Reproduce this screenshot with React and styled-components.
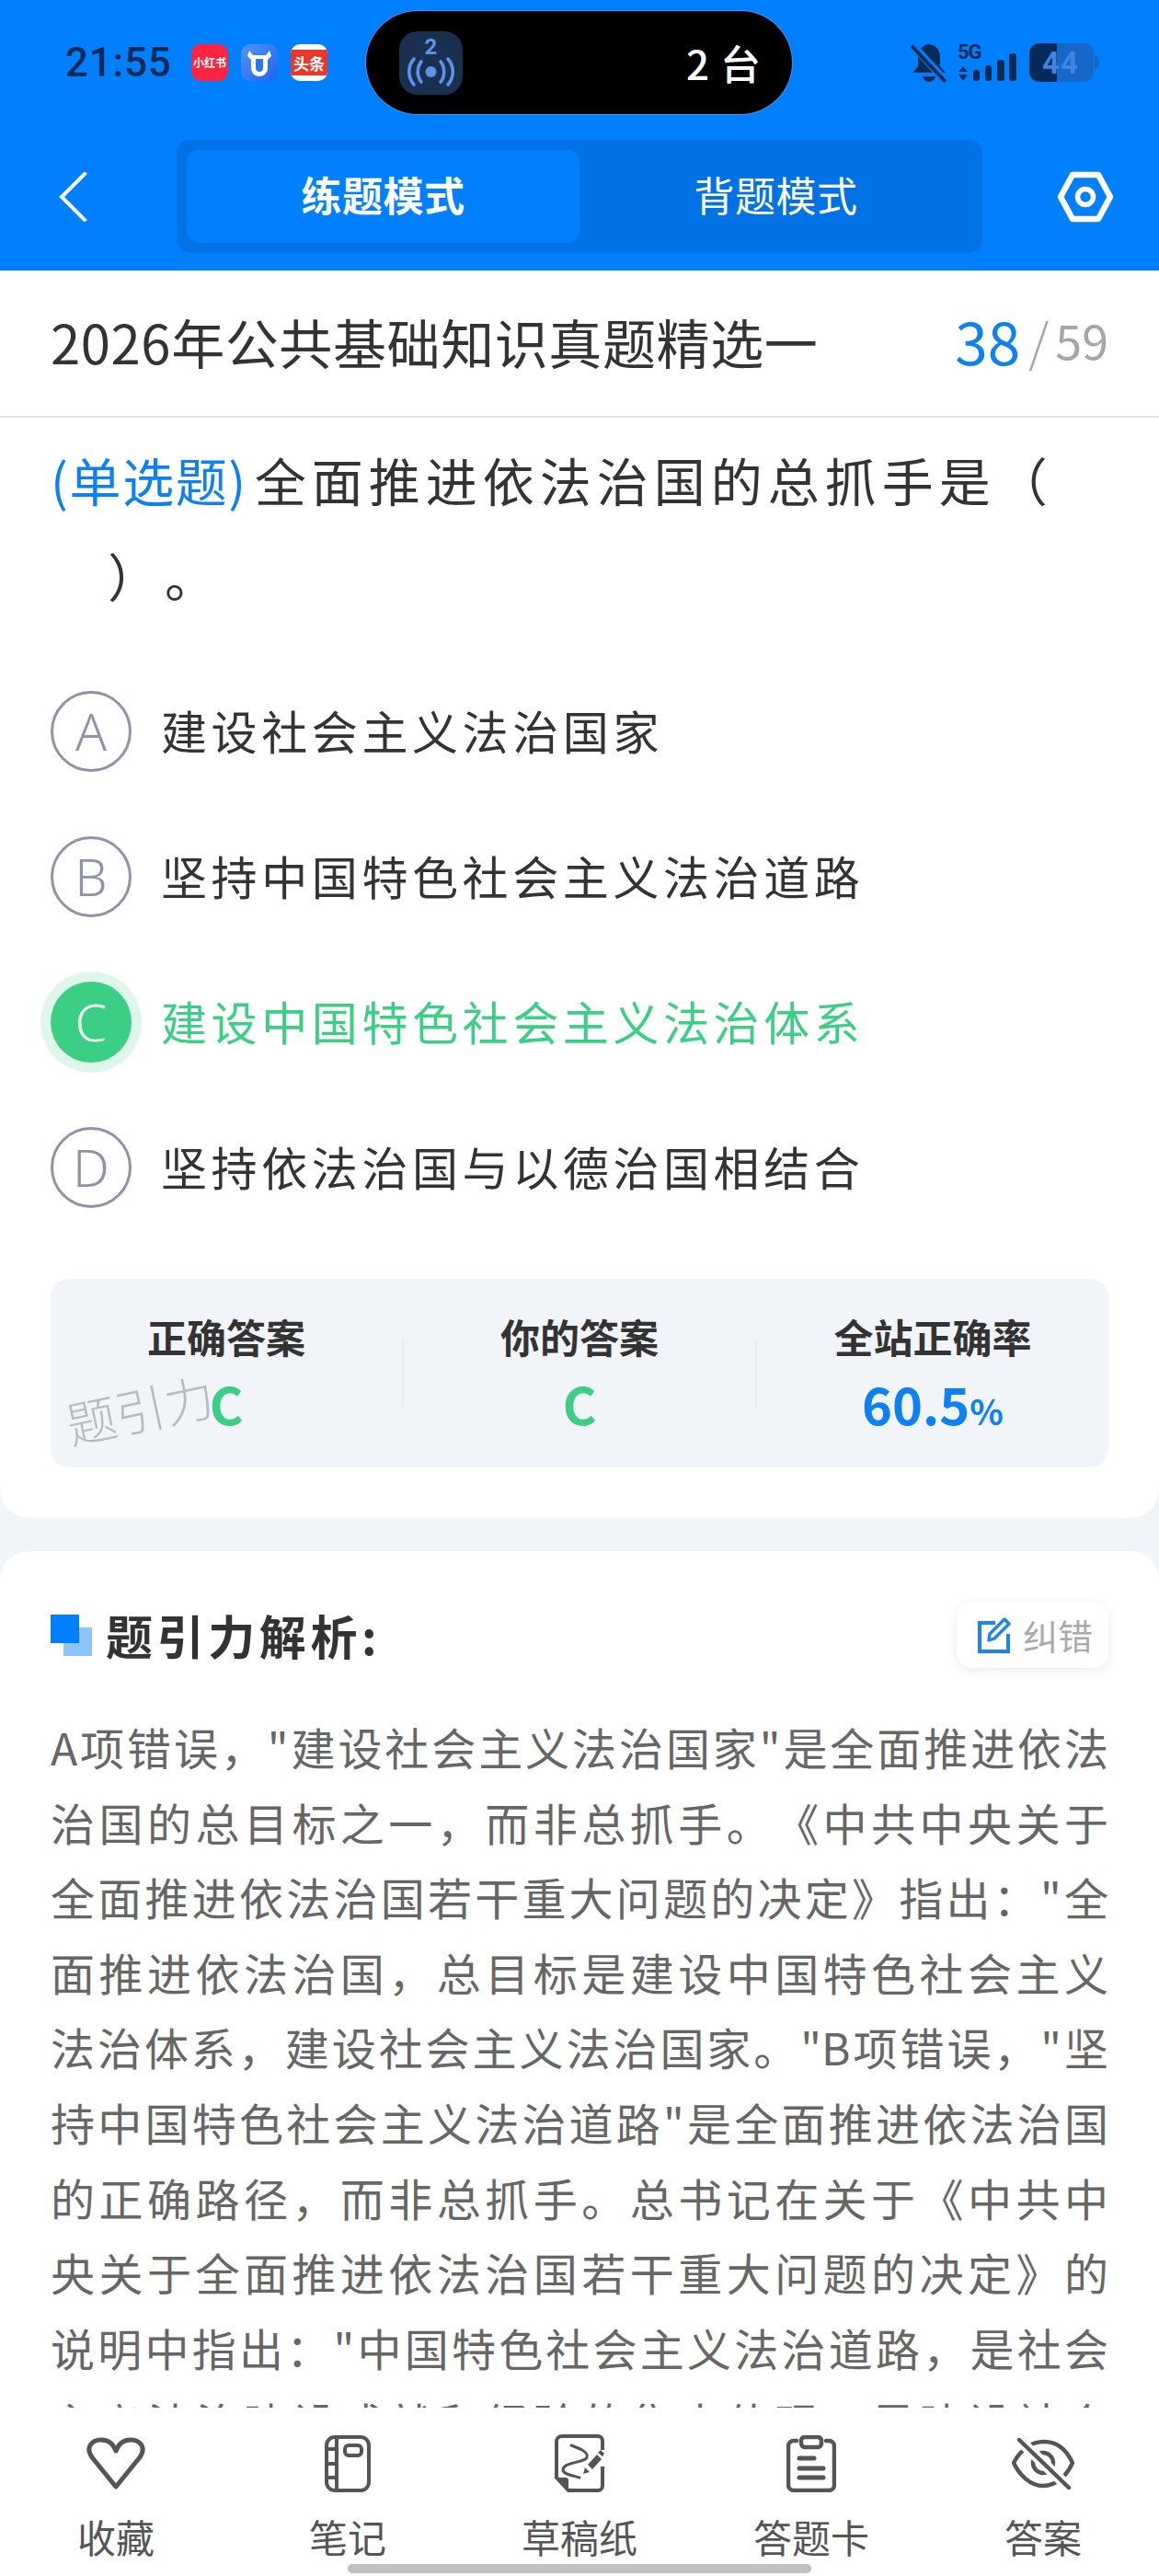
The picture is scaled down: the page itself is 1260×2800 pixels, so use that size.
import React from 'react';
import styled, { createGlobalStyle } from 'styled-components';

const CJK = '"Noto Sans CJK SC", "Noto Sans", sans-serif';
const BLUE = '#0080ff';
const GREEN = '#3bcf85';
const DARK = '#062b57';

const Global = createGlobalStyle`
  html, body { margin: 0; padding: 0; background: #fff; }
  * { box-sizing: border-box; }
  body { font-family: ${CJK}; overflow: hidden; text-spacing-trim: space-all; }
`;

const Page = styled.div`
  width: 1260px; height: 2800px; display: flex; flex-direction: column;
  background: #f1f5f9; overflow: hidden;
`;
const Header = styled.header`
  height: 294px; background: ${BLUE}; flex: none; padding-top: 12px;
  display: flex; flex-direction: column;
`;
const StatusBar = styled.div`
  height: 112px; display: flex; align-items: center; padding-left: 71px; flex: none;
`;
const StatusLeft = styled.div`
  width: 327px; display: flex; align-items: center;
`;
const Clock = styled.span`
  font: 500 44px/1 Roboto, sans-serif; color: ${DARK}; letter-spacing: 0.8px; width: 137px;
`;
const AppIcons = styled.div`display: flex; gap: 14px;`;
const AppIcon = styled.div`
  width: 40px; height: 40px; border-radius: 10px; background: ${p => p.$bg};
  display: flex; align-items: center; justify-content: center; overflow: hidden;
  color: #fff; font-weight: 700; font-size: ${p => p.$size}px; line-height: 1; white-space: nowrap;
`;
const ToutiaoBand = styled.div`
  width: 100%; height: 28px; background: #e8372c; display: flex; align-items: center; justify-content: center;
`;
const Island = styled.div`
  width: 463px; height: 112px; border-radius: 56px; background: #000; flex: none;
  display: flex; align-items: center; justify-content: space-between;
  padding: 0 34px 0 36px; box-shadow: 0 0 0 1px rgba(120,170,230,.5);
`;
const IslandBadge = styled.div`
  width: 69px; height: 69px; border-radius: 20px; background: #1a3050;
`;
const IslandText = styled.span`
  color: #fff; font-size: 44px; line-height: 1; font-weight: 500; word-spacing: 2px;
`;
const StatusRight = styled.div`
  margin-left: 129px; display: flex; align-items: center;
`;
const NavBar = styled.div`
  height: 123px; margin-top: 28px; display: flex; align-items: center; padding-left: 64px; flex: none;
`;
const BackButton = styled.div`width: 128px; display: flex;`;
const Segment = styled.div`
  width: 876px; height: 123px; border-radius: 14px; background: #0072e6; padding: 11px;
  display: flex; flex: none;
`;
const SegmentItem = styled.div`
  flex: 1; border-radius: 14px; background: ${p => (p.$active ? BLUE : 'transparent')};
  color: #fff; font-size: 44px; font-weight: ${p => (p.$active ? 700 : 400)}; padding-bottom: 6px;
  letter-spacing: 0.5px; display: flex; align-items: center; justify-content: center;
`;
const GearButton = styled.div`margin-left: 81px; display: flex;`;

const TopCard = styled.section`
  background: #fff; flex: none; height: 1356px; border-radius: 0 0 32px 32px;
`;
const TitleRow = styled.div`
  height: 160px; border-bottom: 2px solid #e3e3e3; padding: 0 55px;
  display: flex; align-items: center; justify-content: space-between;
`;
const Title = styled.h1`
  margin: 0; padding-bottom: 4px; font-size: 58px; font-weight: 400; color: #333; line-height: 1;
  white-space: nowrap; letter-spacing: 0.6px;
`;
const Counter = styled.div`
  display: flex; align-items: center; font-size: 52px; color: #a6a6a6; line-height: 1; padding-bottom: 8px;
`;
const CounterNow = styled.span`
  color: #0d80f2; font-size: 64px; margin-right: 9px;
`;
const CounterSlash = styled.span`margin-right: 7px; font-size: 56px; font-weight: 300;`;
const Question = styled.p`
  margin: 0; padding: 15px 55px 0; font-size: 56px; line-height: 104px; color: #333;
  letter-spacing: 6px; white-space: nowrap;
`;
const QType = styled.span`color: #0d80f2; letter-spacing: 1.6px; margin-right: 8px;`;
const Options = styled.div`
  margin-top: 74px; padding: 0 55px; display: flex; flex-direction: column; gap: 70px;
`;
const Option = styled.div`display: flex; align-items: center; gap: 32px;`;
const Bullet = styled.div`
  width: 88px; height: 88px; border-radius: 50%; flex: none; display: flex;
  align-items: center; justify-content: center; padding-bottom: 2px;
  font: 300 56px/1 "Noto Sans", sans-serif;
  color: ${p => (p.$correct ? '#e9fbf2' : '#8e93a8')};
  border: ${p => (p.$correct ? 'none' : '3px solid #8e93a8')};
  background: ${p => (p.$correct ? GREEN : 'transparent')};
  box-shadow: ${p => (p.$correct ? '0 0 0 11px #dff7ea' : 'none')};
`;
const OptionText = styled.span`
  font-size: 50px; letter-spacing: 4.6px; line-height: 1; white-space: nowrap; padding-bottom: 4px;
  color: ${p => (p.$correct ? GREEN : '#333')};
`;
const AnswerBox = styled.div`
  position: relative; margin: 77px 55px 0; height: 205px; border-radius: 20px; background: #f1f5f9;
  display: flex;
`;
const Stat = styled.div`
  flex: 1; padding-top: 40px; display: flex; flex-direction: column; align-items: center;
`;
const StatLabel = styled.div`font-size: 43px; font-weight: 700; line-height: 44px; color: #333;`;
const StatValue = styled.div`
  margin-top: 16px; font-size: 56px; line-height: 70px; font-weight: 700; color: ${p => p.$color};
`;
const Percent = styled.span`font-size: 38px;`;
const StatDivider = styled.div`
  width: 2px; height: 73px; margin-top: 66px; background: #e8ecf0; flex: none;
`;
const Watermark = styled.div`
  position: absolute; left: 16px; top: 114px; font-size: 54px; font-weight: 300; line-height: 1;
  color: rgba(150,150,155,.62); transform: rotate(-12deg); white-space: nowrap;
`;

const Explain = styled.section`
  margin-top: 36px; flex: 1; min-height: 0; overflow: hidden; background: #fff;
  border-radius: 32px 32px 0 0; padding: 55px 55px 0;
`;
const ExplainHead = styled.div`
  height: 72px; display: flex; align-items: center; justify-content: space-between;
`;
const ExplainTitle = styled.h2`
  margin: 0; display: flex; align-items: center; font-size: 51px; font-weight: 700; color: #333;
  letter-spacing: 4.6px; line-height: 1;
`;
const TitleMark = styled.div`
  position: relative; width: 45px; height: 45px; margin-right: 15px; flex: none;
  &::before { content: ''; position: absolute; right: 0; bottom: 0; width: 31px; height: 31px; background: #8cc4ff; }
  &::after { content: ''; position: absolute; left: 0; top: 0; width: 31px; height: 31px; background: ${BLUE}; }
`;
const FixButton = styled.div`
  width: 165px; height: 72px; border-radius: 16px; background: #fff;
  box-shadow: 0 3px 12px rgba(30,50,90,.1); display: flex; align-items: center;
  padding-left: 23px; gap: 13px; color: #aaa; font-size: 38px; line-height: 1; white-space: nowrap;
`;
const ExplainBody = styled.div`
  margin-top: 45px; color: #666; font-size: 48px; line-height: 81.6px;
`;
const BodyLine = styled.div`
  text-align: justify; text-align-last: justify; white-space: nowrap;
`;

const BottomBar = styled.nav`
  height: 183px; flex: none; background: #fff; padding-top: 29px;
  display: flex; flex-direction: column; align-items: center;
`;
const Tabs = styled.div`width: 100%; display: grid; grid-template-columns: repeat(5, 1fr);`;
const Tab = styled.div`display: flex; flex-direction: column; align-items: center;`;
const TabIcon = styled.div`height: 64px; display: flex; align-items: center; justify-content: center;`;
const TabLabel = styled.div`
  margin-top: 25px; font-size: 42px; line-height: 44px; color: #555; white-space: nowrap;
`;
const HomeBar = styled.div`
  margin-top: 8px; width: 504px; height: 10px; border-radius: 5px; background: #c0c0c0;
`;

const Back = () => (
  <svg width="32" height="54" viewBox="0 0 32 54" fill="none">
    <path d="M28 2 L3 27 L28 52" stroke="#fff" strokeWidth="4" strokeLinecap="square" />
  </svg>
);
const Gear = () => (
  <svg width="62" height="56" viewBox="0 0 62 56" fill="none" stroke="#fff" strokeLinejoin="round">
    <path d="M17 4 H45 L58 28 L45 52 H17 L4 28 Z" strokeWidth="6.5" />
    <circle cx="31" cy="28" r="8.5" strokeWidth="5.5" />
  </svg>
);
const Cow = () => (
  <svg width="40" height="40" viewBox="0 0 40 40">
    <path d="M9 7 L13 12 H27 L31 7 L33 13 L29 17 V26 C29 31 25 35 20 35 C15 35 11 31 11 26 V17 L7 13 Z" fill="#fff" />
    <path d="M16 16 H24 V26 C24 28.5 22 30 20 30 C18 30 16 28.5 16 26 Z" fill="#2d74ee" />
  </svg>
);
const Broadcast = () => (
  <IslandBadge>
    <svg width="69" height="69" viewBox="0 0 69 69" fill="none" stroke="#5b93e8" strokeLinecap="round">
      <text x="34.5" y="25" textAnchor="middle" fontSize="24" fontWeight="700" fontFamily="Roboto, sans-serif" fill="#5b93e8" stroke="none">2</text>
      <circle cx="34.5" cy="44" r="6" fill="#5b93e8" stroke="none" />
      <path d="M24 33 C19 39 19 49 24 55 M45 33 C50 39 50 49 45 55" strokeWidth="3.6" />
      <path d="M16 30 C9 38 9 50 16 58 M53 30 C60 38 60 50 53 58" strokeWidth="3.6" />
    </svg>
  </IslandBadge>
);
const BellOff = () => (
  <svg width="40" height="44" viewBox="0 0 40 44">
    <path d="M20 2 C12 3 8 9 8 16 V26 L2 33 H38 L32 26 V16 C32 9 28 3 20 2 Z" fill={DARK} />
    <path d="M13 37 H27 C26 41 23 43 20 43 C17 43 14 41 13 37 Z" fill={DARK} />
    <path d="M2 3 L38 42" stroke={BLUE} strokeWidth="8" />
    <path d="M1 4 L38 43" stroke={DARK} strokeWidth="4" />
  </svg>
);
const Signal = () => (
  <svg width="66" height="42" viewBox="0 0 66 42" style={{ marginLeft: 11 }}>
    <text x="0" y="17" fontSize="22" fontWeight="700" fontFamily="Roboto, sans-serif" fill={DARK} letterSpacing="-1">5G</text>
    <path d="M1 31 L6 25 L11 31 Z M1 34 H11 L6 41 Z" fill={DARK} />
    <rect x="17" y="29" width="7" height="12" rx="3" fill={DARK} />
    <rect x="30" y="24" width="7" height="17" rx="3" fill={DARK} />
    <rect x="43" y="18" width="8" height="23" rx="3" fill={DARK} />
    <rect x="56" y="11" width="8" height="30" rx="3" fill={DARK} />
  </svg>
);
const Battery = () => (
  <svg width="76" height="42" viewBox="0 0 76 42" style={{ marginLeft: 12 }}>
    <rect x="0" y="0" width="70" height="42" rx="11" fill="#1667c8" />
    <path d="M11 0 H30 V42 H11 A11 11 0 0 1 0 31 V11 A11 11 0 0 1 11 0 Z" fill={DARK} />
    <path d="M71 13 C75 14 76 17 76 21 C76 25 75 28 71 29 Z" fill="#1667c8" />
    <text x="34" y="33" textAnchor="middle" fontSize="33" fontWeight="700" fontFamily="Roboto, sans-serif" fill="#3f86e0" letterSpacing="1">44</text>
  </svg>
);
const EditIcon = () => (
  <svg width="36" height="40" viewBox="0 0 36 40" fill="none" stroke="#1d84ec" strokeWidth="4">
    <path d="M19 7 H2 V38 H33 V19" />
    <path d="M12 26 L13 19 L29 3 L34 8 L18 24 Z" strokeLinejoin="round" strokeWidth="3.4" />
  </svg>
);
const Heart = () => (
  <svg width="66" height="58" viewBox="0 0 66 58" fill="none" stroke="#555" strokeWidth="5" strokeLinejoin="round">
    <path d="M33 54 L7 22 C-1 10 8 3 17 3 C24 3 30 7 33 15 C36 7 42 3 49 3 C58 3 67 10 59 22 Z" />
  </svg>
);
const Notebook = () => (
  <svg width="50" height="62" viewBox="0 0 50 62" fill="none" stroke="#555" strokeWidth="4">
    <rect x="2" y="2" width="46" height="58" rx="9" />
    <path d="M13 2 V60 M2 15 H13 M2 31 H13 M2 46 H13" />
    <rect x="22" y="11" width="18" height="11" rx="4" />
  </svg>
);
const Draft = () => (
  <svg width="56" height="64" viewBox="0 0 56 64" fill="none" stroke="#555">
    <path d="M53 35 V56 A5 5 0 0 1 48 61 H16 L3 47 V8 A6 6 0 0 1 9 2 H48 A5 5 0 0 1 53 7 V17" strokeWidth="4" />
    <path d="M2 47 H13 A3 3 0 0 1 16 50 V62 Z" fill="#555" stroke="none" />
    <path d="M19 12 C30 16 38 20 36 25 C34 31 11 30 10 38 C9 43 20 45 28 47" strokeWidth="3" strokeLinecap="round" />
    <path d="M37 33 L47 22 L52 27 L42 38 Z" fill="#555" stroke="none" />
    <path d="M34 36 L39 41 L32 43 Z" fill="#555" stroke="none" />
    <path d="M48 20 L51 17 L55 21 L53 24 Z" fill="#555" stroke="none" />
  </svg>
);
const Clipboard = () => (
  <svg width="54" height="62" viewBox="0 0 54 62" fill="none" stroke="#555" strokeWidth="4.5" strokeLinecap="round">
    <path d="M11 6 H8 A6 6 0 0 0 2 12 V54 A6 6 0 0 0 8 60 H46 A6 6 0 0 0 52 54 V12 A6 6 0 0 0 46 6 H43" />
    <rect x="16" y="2" width="22" height="11" rx="4" />
    <path d="M14 25 H30 M14 36 H40 M14 46 H40" strokeWidth="5" />
  </svg>
);
const EyeOff = () => (
  <svg width="68" height="56" viewBox="0 0 68 56" fill="none" stroke="#555" strokeWidth="4.5" strokeLinejoin="round">
    <path d="M2 27 C10 12 22 4 35 4 C50 4 60 14 66 27 C60 41 48 52 34 52 C20 52 8 40 2 27 Z" />
    <circle cx="34" cy="27" r="11" />
    <path d="M7 1 L62 54" stroke="#fff" strokeWidth="12" />
    <path d="M8 2 L62 54" strokeLinecap="round" />
  </svg>
);

const OPTIONS = [
  ['A', '建设社会主义法治国家'],
  ['B', '坚持中国特色社会主义法治道路'],
  ['C', '建设中国特色社会主义法治体系', true],
  ['D', '坚持依法治国与以德治国相结合'],
];
const BODY = [
  'A项错误，"建设社会主义法治国家"是全面推进依法',
  '治国的总目标之一，而非总抓手。《中共中央关于',
  '全面推进依法治国若干重大问题的决定》指出："全',
  '面推进依法治国，总目标是建设中国特色社会主义',
  '法治体系，建设社会主义法治国家。"B项错误，"坚',
  '持中国特色社会主义法治道路"是全面推进依法治国',
  '的正确路径，而非总抓手。总书记在关于《中共中',
  '央关于全面推进依法治国若干重大问题的决定》的',
  '说明中指出："中国特色社会主义法治道路，是社会',
  '主义法治建设成就和经验的集中体现，是建设社会',
];
const TABS = [
  ['收藏', Heart],
  ['笔记', Notebook],
  ['草稿纸', Draft],
  ['答题卡', Clipboard],
  ['答案', EyeOff],
];

export default function App() {
  return (
    <Page>
      <Global />
      <Header>
        <StatusBar>
          <StatusLeft>
            <Clock>21:55</Clock>
            <AppIcons>
              <AppIcon $bg="#ff2442" $size={12}>小红书</AppIcon>
              <AppIcon $bg="linear-gradient(135deg,#4f96f2,#1f63ee)"><Cow /></AppIcon>
              <AppIcon $bg="#fff" $size={17}><ToutiaoBand>头条</ToutiaoBand></AppIcon>
            </AppIcons>
          </StatusLeft>
          <Island>
            <Broadcast />
            <IslandText>2 台</IslandText>
          </Island>
          <StatusRight>
            <BellOff />
            <Signal />
            <Battery />
          </StatusRight>
        </StatusBar>
        <NavBar>
          <BackButton><Back /></BackButton>
          <Segment>
            <SegmentItem $active>练题模式</SegmentItem>
            <SegmentItem>背题模式</SegmentItem>
          </Segment>
          <GearButton><Gear /></GearButton>
        </NavBar>
      </Header>
      <TopCard>
        <TitleRow>
          <Title>2026年公共基础知识真题精选一</Title>
          <Counter>
            <CounterNow>38</CounterNow>
            <CounterSlash>/</CounterSlash>
            59
          </Counter>
        </TitleRow>
        <Question>
          <QType>(单选题)</QType>全面推进依法治国的总抓手是（<br />　）。
        </Question>
        <Options>
          {OPTIONS.map(([k, t, c]) => (
            <Option key={k}>
              <Bullet $correct={c}>{k}</Bullet>
              <OptionText $correct={c}>{t}</OptionText>
            </Option>
          ))}
        </Options>
        <AnswerBox>
          <Stat>
            <StatLabel>正确答案</StatLabel>
            <StatValue $color={GREEN}>C</StatValue>
          </Stat>
          <StatDivider />
          <Stat>
            <StatLabel>你的答案</StatLabel>
            <StatValue $color={GREEN}>C</StatValue>
          </Stat>
          <StatDivider />
          <Stat>
            <StatLabel>全站正确率</StatLabel>
            <StatValue $color="#0d80f2">60.5<Percent>%</Percent></StatValue>
          </Stat>
          <Watermark>题引力</Watermark>
        </AnswerBox>
      </TopCard>
      <Explain>
        <ExplainHead>
          <ExplainTitle><TitleMark />题引力解析:</ExplainTitle>
          <FixButton><EditIcon />纠错</FixButton>
        </ExplainHead>
        <ExplainBody>
          {BODY.map((l, i) => <BodyLine key={i}>{l}</BodyLine>)}
        </ExplainBody>
      </Explain>
      <BottomBar>
        <Tabs>
          {TABS.map(([label, Icon]) => (
            <Tab key={label}>
              <TabIcon><Icon /></TabIcon>
              <TabLabel>{label}</TabLabel>
            </Tab>
          ))}
        </Tabs>
        <HomeBar />
      </BottomBar>
    </Page>
  );
}
